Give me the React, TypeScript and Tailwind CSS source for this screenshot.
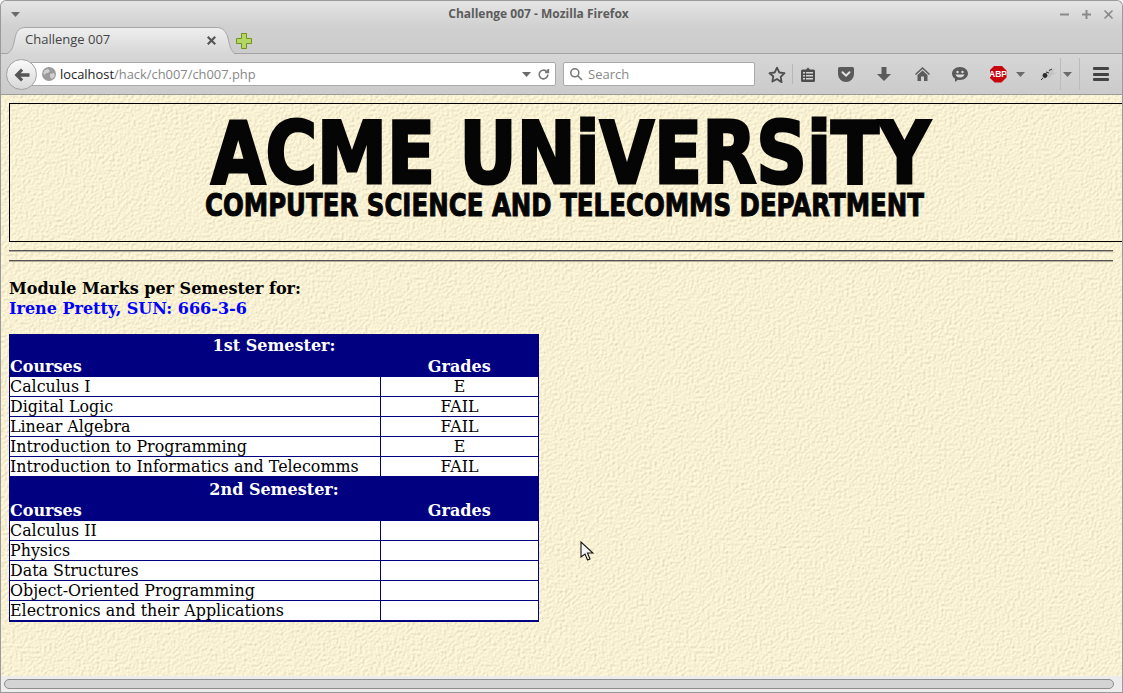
import { ReactNode } from "react";

const semesters = [
  {
    title: "1st Semester:",
    titleRow: "h-[21px]",
    rows: [
      ["Calculus I", "E"],
      ["Digital Logic", "FAIL"],
      ["Linear Algebra", "FAIL"],
      ["Introduction to Programming", "E"],
      ["Introduction to Informatics and Telecomms", "FAIL"],
    ],
  },
  {
    title: "2nd Semester:",
    titleRow: "h-[23px]",
    rows: [
      ["Calculus II", ""],
      ["Physics", ""],
      ["Data Structures", ""],
      ["Object-Oriented Programming", ""],
      ["Electronics and their Applications", ""],
    ],
  },
];

function Caret({ className }: { className?: string }) {
  return (
    <svg className={className} width="9" height="5" viewBox="0 0 9 5">
      <path d="M0 0h9L4.500 5z" fill="#6a6a6a" />
    </svg>
  );
}

function Slot({ width, children }: { width: number; children: ReactNode }) {
  return (
    <div className="flex items-center justify-center h-full shrink-0" style={{ width }}>
      {children}
    </div>
  );
}

function Toolbar() {
  return (
    <div className="h-[41px] shrink-0 flex items-center bg-gradient-to-b from-[#d6d6d6] to-[#cbcbcb] border-b border-[#9c9c9c] relative">
      {/* back button sits over the url bar */}
      <div className="absolute left-[5px] top-[5px] w-[31px] h-[31px] rounded-full border border-[#a3a3a3] bg-gradient-to-b from-[#fafafa] to-[#d8d8d8] flex items-center justify-center z-10">
        <svg width="16" height="14" viewBox="0 0 16 14">
          <path d="M7 0.500 L9.200 2.700 L6.600 5.200 H15.500 V8.800 H6.600 L9.200 11.300 L7 13.500 L0.500 7z" fill="#555" />
        </svg>
      </div>
      <div className="ml-[20px] w-[535px] h-[24px] shrink-0 bg-white border border-[#a9a9a9] rounded-r-[2px] flex items-center pl-[20px] pr-[5px] font-['Open_Sans',sans-serif] text-[12.9px]">
        <svg width="14" height="14" viewBox="0 0 14 14" className="shrink-0">
          <circle cx="7" cy="7" r="7" fill="#9b9b9b" />
          <path d="M3 3l3-1 2 2-2 2-2 0-1 2-2-2zM8 7l4-1 1 3-3 3-2-2z" fill="#d0d0d0" />
        </svg>
        <span className="ml-[4px] pt-[1px] text-[#222]">localhost</span>
        <span className="pt-[1px] text-[#888]">/hack/ch007/ch007.php</span>
        <Caret className="ml-auto" />
        <svg className="ml-[6px]" width="13" height="13" viewBox="0 0 24 24" fill="none" stroke="#777" strokeWidth="3">
          <path d="M20 12a8 8 0 1 1-2.500-5.800" />
          <path d="M21 2v6h-6" fill="#777" />
        </svg>
      </div>
      <div className="ml-[7px] w-[192px] h-[24px] shrink-0 bg-white border border-[#a9a9a9] rounded-[2px] flex items-center pl-[5px] font-['Open_Sans',sans-serif] text-[13px] text-[#888]">
        <svg width="14" height="14" viewBox="0 0 14 14" fill="none" stroke="#777" strokeWidth="1.600">
          <circle cx="5.800" cy="5.800" r="4" />
          <path d="M8.800 8.800L13 13" />
        </svg>
        <span className="ml-[5px] pt-[1px]">Search</span>
      </div>
      <div className="ml-[7px] flex items-center h-full">
        <Slot width={30}>
          <svg width="18" height="17" viewBox="0 0 18 17">
            <path d="M9 1.600l2.300 4.900 5.200.7-3.800 3.700.9 5.300L9 13l-4.600 2.500.9-5.300L1.500 7.200l5.200-.7z" fill="none" stroke="#4e4e4e" strokeWidth="1.800" strokeLinejoin="round" />
          </svg>
        </Slot>
        <div className="w-px h-[20px] bg-[#b4b8bc] shrink-0" />
        <Slot width={30}>
          <svg width="14" height="15" viewBox="0 0 14 15">
            <path d="M1.500 2.500H5L7 .5 9 2.500h3.500A1.500 1.500 0 0 1 14 4v9.500a1.500 1.500 0 0 1-1.500 1.500h-11A1.500 1.500 0 0 1 0 13.500V4a1.500 1.500 0 0 1 1.500-1.500z" fill="#4e4e4e" />
            <path d="M2 5h2v1.500H2zM5 5h7v1.500H5zM2 8h2v1.500H2zM5 8h7v1.500H5zM2 11h2v1.500H2zM5 11h7v1.500H5z" fill="#d4d4d4" />
          </svg>
        </Slot>
        <Slot width={46}>
          <svg width="16" height="15" viewBox="0 0 16 15">
            <path d="M1.500 0h13A1.500 1.500 0 0 1 16 1.500V7a8 8 0 0 1-16 0V1.500A1.500 1.500 0 0 1 1.500 0z" fill="#5a5a5a" />
            <path d="M4.500 5.200L8 8.600l3.500-3.400" fill="none" stroke="#e2e2e2" strokeWidth="2" strokeLinecap="round" />
          </svg>
        </Slot>
        <Slot width={30}>
          <svg width="14" height="14" viewBox="0 0 14 14">
            <path d="M4.500 0h5v7H14l-7 7-7-7h4.500z" fill="#5a5a5a" />
          </svg>
        </Slot>
        <Slot width={46}>
          <svg width="15" height="14" viewBox="0 0 15 14">
            <path d="M7.500 0L15 7l-1 1-6.500-6L1 8 0 7z" fill="#5a5a5a" />
            <path d="M2.500 8l5-4.500 5 4.500v6H9V9.500H6V14H2.500z" fill="#5a5a5a" />
          </svg>
        </Slot>
        <Slot width={30}>
          <svg width="16" height="15" viewBox="0 0 16 15">
            <path d="M8 0c4.400 0 8 2.900 8 6.500S12.400 13 8 13c-.7 0-1.400-.1-2-.2L3 15v-3.200C1.200 10.600 0 8.700 0 6.500 0 2.900 3.600 0 8 0z" fill="#5a5a5a" />
            <circle cx="5.500" cy="5" r="1.200" fill="#ddd" />
            <circle cx="10.500" cy="5" r="1.200" fill="#ddd" />
            <path d="M3.500 7.500h9c-.6 2-2.400 3-4.500 3s-3.900-1-4.500-3z" fill="#ddd" />
          </svg>
        </Slot>
        <Slot width={46}>
          <div className="w-[17px] h-[17px] [clip-path:polygon(30%_0,70%_0,100%_30%,100%_70%,70%_100%,30%_100%,0_70%,0_30%)] bg-[#c8060e] flex items-center justify-center text-white font-['Liberation_Sans',sans-serif] font-bold text-[8.500px] leading-none">
            ABP
          </div>
        </Slot>
        <Caret className="-ml-[5px] shrink-0" />
        <Slot width={46}>
          <svg width="16" height="13" viewBox="0 0 16 13">
            <path d="M1 8l5-4 3-3 6 0-2 3 3 2-4 1-2 3-3-1-3 3z" fill="#c4c4c4" />
            <circle cx="5" cy="7.500" r="2.400" fill="#2e2e2e" />
            <path d="M9 2.500l3-1.500M3 10l-2 2M6 4l3 1" stroke="#333" />
          </svg>
        </Slot>
        <div className="w-px h-[32px] bg-[#bcbcbc] -ml-[11px] shrink-0" />
        <Caret className="ml-[2px] shrink-0" />
        <div className="w-px h-[32px] bg-[#bcbcbc] ml-[7px] shrink-0" />
        <div className="ml-[13px] w-[16px] shrink-0 flex flex-col gap-[2.500px]">
          <div className="h-[3px] rounded-[1px] bg-[#444]" />
          <div className="h-[3px] rounded-[1px] bg-[#444]" />
          <div className="h-[3px] rounded-[1px] bg-[#444]" />
        </div>
      </div>
    </div>
  );
}

function TitleBar() {
  return (
    <div className="h-[53px] shrink-0 relative bg-gradient-to-b from-[#e5e5e5] via-[#d0d0d0] to-[#cccccc] border-b border-[#a3a3a3] rounded-t-[6px]">
      <div className="h-[26px] flex items-center pl-[10px] pr-[9px]">
        <Caret />
        <div className="flex-1 text-center font-['Open_Sans',sans-serif] font-bold text-[12px] text-[#5c5c5c] pr-[3px]">
          Challenge 007 - Mozilla Firefox
        </div>
        <div className="flex items-center gap-[13px]">
          <svg width="9" height="9" viewBox="0 0 9 9"><path d="M0 3.500h9v2H0z" fill="#8a8a8a" /></svg>
          <svg width="9" height="9" viewBox="0 0 9 9"><path d="M3.500 0h2v3.500H9v2H5.500V9h-2V5.500H0v-2h3.500z" fill="#8a8a8a" /></svg>
          <svg width="9" height="9" viewBox="0 0 9 9"><path d="M1 0l3.500 3.300L8 0l1 1-3.300 3.500L9 8 8 9 4.500 5.700 1 9 0 8l3.300-3.500L0 1z" fill="#8a8a8a" /></svg>
        </div>
      </div>
      {/* active tab overlaps the line under the strip */}
      <div className="flex items-center h-[28px]">
        <div className="relative w-[232px] h-[28px] ml-[1px] flex items-center pl-[23px] pr-[14px] pb-[2px]">
          <svg className="absolute left-0 top-0" width="232" height="28" viewBox="0 0 232 28">
            <defs>
              <linearGradient id="tabFill" x1="0" y1="0" x2="0" y2="1">
                <stop offset="0" stopColor="#efefef" />
                <stop offset="1" stopColor="#d6d6d6" />
              </linearGradient>
            </defs>
            <path d="M0 27.500C10 27.500 11 20 13 11 14.500 4 17 .5 24 .5H214C221 .5 224 4 226 11 228 20 229 27.500 238 27.500z" fill="url(#tabFill)" stroke="#a5a5a5" />
          </svg>
          <span className="relative font-['Open_Sans',sans-serif] text-[13px] text-[#444]">Challenge 007</span>
          <svg className="relative ml-auto mr-[4px]" width="9" height="9" viewBox="0 0 9 9">
            <path d="M1.500 0l3 3 3-3L9 1.500l-3 3 3 3L7.500 9l-3-3-3 3L0 7.500l3-3-3-3z" fill="#555" />
          </svg>
        </div>
        <svg className="ml-[2px] -mt-[1px]" width="16" height="16" viewBox="0 0 16 16">
          <path d="M5.500 .5h5v5h5v5h-5v5h-5v-5h-5v-5h5z" fill="#b4d662" stroke="#6f9419" />
        </svg>
      </div>
    </div>
  );
}

function SemesterRows({ title, titleRow, rows }: { title: string; titleRow: string; rows: string[][] }) {
  return (
    <>
      <tr className={`${titleRow} bg-[#000080] text-white font-bold`}>
        <td colSpan={2} className="p-0 text-center leading-[18px] font-['DejaVu_Serif',serif] text-[16px] align-bottom">
          {title}
        </td>
      </tr>
      <tr className="h-[21px] bg-[#000080] text-white font-bold">
        <td className="p-0 leading-[18px] font-['DejaVu_Serif',serif] text-[16px] align-bottom">Courses</td>
        <td className="p-0 text-center leading-[18px] font-['DejaVu_Serif',serif] text-[16px] align-bottom">Grades</td>
      </tr>
      {rows.map(([course, grade]) => (
        <tr key={course} className="h-[20px] bg-white text-black">
          <td className="p-0 leading-[19px] border-t border-r border-b border-[#000080] whitespace-nowrap">{course}</td>
          <td className="p-0 text-center leading-[19px] border-t border-b border-[#000080]">{grade}</td>
        </tr>
      ))}
    </>
  );
}

function PaperTexture() {
  return (
    <svg className="absolute inset-0 w-full h-full" aria-hidden="true">
      <filter id="paper" x="0" y="0" width="100%" height="100%">
        <feTurbulence type="fractalNoise" baseFrequency="0.38" numOctaves="2" seed="7" result="noise" />
        <feDiffuseLighting in="noise" lightingColor="#fcf4d6" surfaceScale="0.750" diffuseConstant="1.100">
          <feDistantLight azimuth="45" elevation="62" />
        </feDiffuseLighting>
      </filter>
      <rect width="100%" height="100%" filter="url(#paper)" />
    </svg>
  );
}

export default function App() {
  return (
    <div className="w-[1123px] h-[693px] overflow-hidden flex flex-col bg-[#e8e8e8] border-x border-[#9a9a9a] border-t rounded-t-[6px]">
      <TitleBar />
      <Toolbar />
      <div className="relative flex-1 overflow-hidden bg-[#f7efd2]">
        <PaperTexture />
        <div className="relative pl-[8px] pt-[8px]">
          <div className="w-[1114px] h-[139px] border border-black">
            <svg className="block" width="1112" height="137" viewBox="0 0 1112 137">
              <text
                x="201"
                y="64"
                transform="scale(1 1.23)"
                textLength="719"
                lengthAdjust="spacingAndGlyphs"
                fontFamily="'DejaVu Sans', sans-serif"
                fontWeight="700"
                fontSize="70"
                fill="#050505"
                stroke="#050505"
                strokeWidth="2.500"
              >
                ACME UNiVERSiTY
              </text>
              <text
                x="195"
                y="84.500"
                transform="scale(1 1.33)"
                textLength="719"
                lengthAdjust="spacingAndGlyphs"
                fontFamily="'DejaVu Sans', sans-serif"
                fontWeight="700"
                fontSize="24"
                fill="#050505"
                stroke="#050505"
                strokeWidth="0.800"
              >
                COMPUTER SCIENCE AND TELECOMMS DEPARTMENT
              </text>
            </svg>
          </div>
          <div className="w-[1104px] mt-[8px] border-t border-b border-t-[#555] border-b-[#b5ae96] h-[2px]" />
          <div className="w-[1104px] mt-[8px] border-t border-b border-t-[#555] border-b-[#b5ae96] h-[2px]" />
          <div className="mt-[17px] font-['DejaVu_Serif',serif] font-bold text-[16px] leading-[20px]">
            <div className="text-black">Module Marks per Semester for:</div>
            <div className="text-[#0000ff]">Irene Pretty, SUN: 666-3-6</div>
          </div>
          <table className="mt-[15px] w-[530px] table-fixed border-collapse border-r border-b-2 border-l border-[#000080] font-['DejaVu_Serif',serif] text-[15.87px]">
            <colgroup>
              <col className="w-[371px]" />
              <col />
            </colgroup>
            <tbody>
              {semesters.map((s) => (
                <SemesterRows key={s.title} title={s.title} titleRow={s.titleRow} rows={s.rows} />
              ))}
            </tbody>
          </table>
        </div>
        {/* mouse pointer caught in the screenshot */}
        <svg className="absolute left-[579px] top-[446px]" width="14" height="21" viewBox="0 0 14 21">
          <path d="M1 1v15l4-3 2.500 6 2.500-1-2.500-6H13z" fill="#f4f4f4" stroke="#111" strokeWidth="1.100" />
        </svg>
      </div>
      <div className="h-[17px] shrink-0 bg-[#ececec] border-b border-[#999] flex items-center pl-[3px] pr-[8px]">
        <div className="w-full h-[10px] rounded-full bg-[#d4d4d4] border border-[#8d8d8d]" />
      </div>
    </div>
  );
}
